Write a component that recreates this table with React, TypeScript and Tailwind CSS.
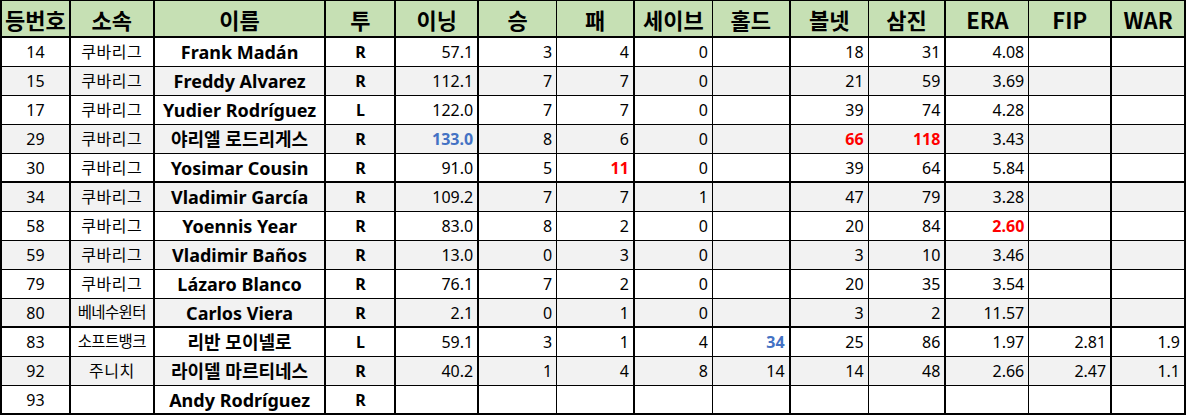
import React from "react";

type Col = { key: string; label: string; w: string; edge: string; align: string };

// 열 정의: 너비, 오른쪽 테두리, 정렬
const cols: Col[] = [
  { key: "no", label: "등번호", w: "w-[69px]", edge: "border-r-2", align: "justify-center" },
  { key: "team", label: "소속", w: "w-[84px]", edge: "border-r-2", align: "justify-center" },
  { key: "name", label: "이름", w: "w-[172px]", edge: "border-r-2", align: "justify-center" },
  { key: "hand", label: "투", w: "w-[70px]", edge: "border-r-2", align: "justify-center" },
  { key: "ip", label: "이닝", w: "w-[83px]", edge: "border-r-2", align: "justify-end" },
  { key: "w", label: "승", w: "w-[78px]", edge: "border-r", align: "justify-end" },
  { key: "l", label: "패", w: "w-[78px]", edge: "border-r-2", align: "justify-end" },
  { key: "sv", label: "세이브", w: "w-[78px]", edge: "border-r", align: "justify-end" },
  { key: "hld", label: "홀드", w: "w-[78px]", edge: "border-r-2", align: "justify-end" },
  { key: "bb", label: "볼넷", w: "w-[78px]", edge: "border-r", align: "justify-end" },
  { key: "so", label: "삼진", w: "w-[78px]", edge: "border-r-2", align: "justify-end" },
  { key: "era", label: "ERA", w: "w-[83px]", edge: "border-r", align: "justify-end" },
  { key: "fip", label: "FIP", w: "w-[83px]", edge: "border-r-2", align: "justify-end" },
  { key: "war", label: "WAR", w: "w-[74px]", edge: "border-r-2", align: "justify-end" },
];

type Row = {
  cells: string[];
  blue?: string[];
  red?: string[];
  thick?: boolean;
};

const rows: Row[] = [
  { cells: ["14", "쿠바리그", "Frank Madán", "R", "57.1", "3", "4", "0", "", "18", "31", "4.08", "", ""] },
  { cells: ["15", "쿠바리그", "Freddy Alvarez", "R", "112.1", "7", "7", "0", "", "21", "59", "3.69", "", ""] },
  { cells: ["17", "쿠바리그", "Yudier Rodríguez", "L", "122.0", "7", "7", "0", "", "39", "74", "4.28", "", ""] },
  { cells: ["29", "쿠바리그", "야리엘 로드리게스", "R", "133.0", "8", "6", "0", "", "66", "118", "3.43", "", ""], blue: ["ip"], red: ["bb", "so"] },
  { cells: ["30", "쿠바리그", "Yosimar Cousin", "R", "91.0", "5", "11", "0", "", "39", "64", "5.84", "", ""], red: ["l"], thick: true },
  { cells: ["34", "쿠바리그", "Vladimir García", "R", "109.2", "7", "7", "1", "", "47", "79", "3.28", "", ""] },
  { cells: ["58", "쿠바리그", "Yoennis Year", "R", "83.0", "8", "2", "0", "", "20", "84", "2.60", "", ""], red: ["era"] },
  { cells: ["59", "쿠바리그", "Vladimir Baños", "R", "13.0", "0", "3", "0", "", "3", "10", "3.46", "", ""] },
  { cells: ["79", "쿠바리그", "Lázaro Blanco", "R", "76.1", "7", "2", "0", "", "20", "35", "3.54", "", ""] },
  { cells: ["80", "베네수윈터", "Carlos Viera", "R", "2.1", "0", "1", "0", "", "3", "2", "11.57", "", ""], thick: true },
  { cells: ["83", "소프트뱅크", "리반 모이넬로", "L", "59.1", "3", "1", "4", "34", "25", "86", "1.97", "2.81", "1.9"], blue: ["hld"] },
  { cells: ["92", "주니치", "라이델 마르티네스", "R", "40.2", "1", "4", "8", "14", "14", "48", "2.66", "2.47", "1.1"] },
  { cells: ["93", "", "Andy Rodríguez", "R", "", "", "", "", "", "", "", "", "", ""], thick: true },
];

const font = "font-['Noto_Sans','Noto_Sans_CJK_KR',sans-serif]";

const App: React.FC = () => {
  return (
    <div className={`w-[1187px] h-[420px] bg-white ${font}`}>
      <div className="w-[1186px] border-l-2 border-t border-black">
        {/* 헤더 */}
        <div className="flex h-[37px] bg-[#c6e0b4] border-b-2 border-black">
          {cols.map((c) => (
            <div
              key={c.key}
              className={`${c.w} ${c.edge} border-black flex items-center justify-center text-[22px] font-semibold text-black font-['Noto_Sans_CJK_KR','Noto_Sans',sans-serif] leading-none`}
            >
              {c.label}
            </div>
          ))}
        </div>

        {/* 데이터 행 */}
        {rows.map((r, i) => (
          <div
            key={i}
            className={`flex h-[29px] ${i % 2 === 1 ? "bg-[#f2f2f2]" : "bg-white"} ${
              r.thick ? "border-b-2 border-black" : "border-b border-black"
            }`}
          >
            {cols.map((c, j) => {
              const v = r.cells[j];
              let tc = "text-[16px] text-black font-normal";
              if (c.key === "name") tc = "text-[18px] font-bold text-black font-['Noto_Sans','Noto_Sans_CJK_KR',sans-serif]";
              if (c.key === "hand") tc = "text-[16px] font-bold text-black";
              if (c.key === "team") {
                tc = v.length > 4 ? "text-[15.5px] tracking-[-0.6px] text-black" : "text-[16px] tracking-[0.5px] text-black";
              }
              if (r.blue?.includes(c.key)) tc = "text-[16px] font-bold text-[#4472c4]";
              if (r.red?.includes(c.key)) tc = "text-[16px] font-bold text-[#ff0000]";
              return (
                <div
                  key={c.key}
                  className={`${c.w} ${c.edge} border-black flex items-center ${c.align} ${
                    c.align === "justify-end" ? "pr-[4px]" : ""
                  } ${tc} leading-none whitespace-nowrap overflow-hidden`}
                >
                  {v}
                </div>
              );
            })}
          </div>
        ))}
      </div>
    </div>
  );
};

export default App;
